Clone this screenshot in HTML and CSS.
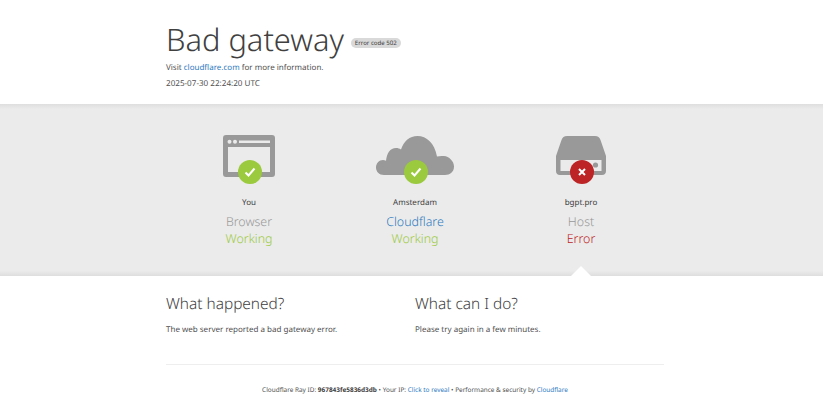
FILE: index.html
```html
<!DOCTYPE html>
<html lang="en">
<head>
<meta charset="utf-8">
<title>bgpt.pro | 502: Bad gateway</title>
<link rel="stylesheet" href="styles.css">
</head>
<body>
<header class="head">
  <div class="wrap">
    <div class="title-row">
      <h1 class="title">Bad gateway</h1>
      <span class="code">Error code 502</span>
    </div>
    <p class="visit">Visit <a href="#">cloudflare.com</a> for more information.</p>
    <p class="time">2025-07-30 22:24:20 UTC</p>
  </div>
</header>
<section class="status">
  <div class="wrap cols">
    <div class="node">
      <div class="icon">
        <svg class="glyph" width="52" height="42" viewBox="0 0 52 42"><path fill="#999" fill-rule="evenodd" d="M3 0h46a3 3 0 0 1 3 3v36a3 3 0 0 1-3 3H3a3 3 0 0 1-3-3V3a3 3 0 0 1 3-3zM5 12v25h42V12zM4.500 6.800a2 2 0 1 0 4 0 2 2 0 1 0-4 0zM10 6.800a2 2 0 1 0 4 0 2 2 0 1 0-4 0zM16 5.500v2.600h31V5.500z"/></svg>
        <span class="badge ok"><svg width="24" height="24" viewBox="0 0 24 24"><path d="M7.500 12.500l3 3 6-7" fill="none" stroke="#fff" stroke-width="2"/></svg></span>
      </div>
      <div class="place">You</div>
      <div class="kind">Browser</div>
      <div class="state good">Working</div>
    </div>
    <div class="node">
      <div class="icon">
        <svg class="glyph glyph-cloud" width="78" height="39" viewBox="0 0 78 39"><path fill="#999" d="M8 39C3 39 0 35.500 0 31.500 0 27.500 3 24 7 24c1 0 2 .2 3 .7C11 17 14 12 20 12c2 0 3.500.5 5 1.500C28 5 33.500 0 41.500 0 50.500 0 58.500 7 61 20.500c2-.5 4-.8 7-.5 5 .5 10 5 10 10.500S74 39 69 39z"/></svg>
        <span class="badge ok"><svg width="24" height="24" viewBox="0 0 24 24"><path d="M7.500 12.500l3 3 6-7" fill="none" stroke="#fff" stroke-width="2"/></svg></span>
      </div>
      <div class="place">Amsterdam</div>
      <div class="kind cf">Cloudflare</div>
      <div class="state good">Working</div>
    </div>
    <div class="node node-host">
      <div class="icon">
        <svg class="glyph" width="50" height="40" viewBox="0 0 50 40"><path fill="#999" fill-rule="evenodd" d="M11 1h28c3 0 4.500 1.500 5.500 4L50 21v15c0 2.500-1.500 4-4 4H4c-2.500 0-4-1.500-4-4V21L5.500 5C6.500 2.500 8 1 11 1zM4.500 25v11h41V25z"/><circle cx="39.500" cy="30" r="2.600" fill="#999"/></svg>
        <span class="badge bad"><svg width="24" height="24" viewBox="0 0 24 24"><path d="M9 9l6 6M15 9l-6 6" fill="none" stroke="#fff" stroke-width="2"/></svg></span>
      </div>
      <div class="place">bgpt.pro</div>
      <div class="kind">Host</div>
      <div class="state err">Error</div>
    </div>
  </div>
</section>
<section class="info">
  <div class="wrap info-cols">
    <div>
      <h2 class="sub">What happened?</h2>
      <p class="copy">The web server reported a bad gateway error.</p>
    </div>
    <div>
      <h2 class="sub">What can I do?</h2>
      <p class="copy">Please try again in a few minutes.</p>
    </div>
  </div>
</section>
<footer class="wrap foot">
  <p class="foot-line">Cloudflare Ray ID: <strong>967843fe5836d3db</strong> • Your IP: <a href="#">Click to reveal</a> • Performance &amp; security by <a href="#">Cloudflare</a></p>
</footer>
</body>
</html>
```
FILE: styles.css
```css
* { box-sizing: border-box; }
html, body { margin: 0; padding: 0; }
body {
  width: 823px;
  height: 414px;
  overflow: hidden;
  background: #fff;
  color: #505050;
  font-family: "Noto Sans", "Open Sans", sans-serif;
  text-rendering: geometricPrecision;
}
a { color: #2f7bbf; text-decoration: none; }
p { margin: 0; }
.wrap { width: 498px; margin-left: 166px; }
.head { height: 104px; padding-top: 21px; }
.title-row { display: flex; align-items: center; height: 38px; }
.title {
  margin: 0;
  font-size: 30.800px;
  font-weight: 300;
  line-height: 38px;
  color: #404040;
}
.code {
  margin-left: 7px;
  margin-top: 5px;
  padding: 0 4px;
  height: 10px;
  line-height: 10px;
  border-radius: 5px;
  background: #d9d9d9;
  font-size: 6.100px;
  color: #404040;
}
.visit { margin-top: 2px; font-size: 8px; line-height: 14px; }
.time { margin-top: 1px; font-size: 8.100px; line-height: 15px; }
.status {
  height: 172px;
  background: linear-gradient(#dedede, #ebebeb 3%, #ebebeb 97%, #dedede);
  padding-top: 31px;
}
.cols { display: grid; grid-template-columns: repeat(3, 166px); }
.node { position: relative; text-align: center; }
.icon {
  position: relative;
  height: 50px;
  display: flex;
  justify-content: center;
  align-items: flex-start;
}
.glyph-cloud { margin-top: 1px; }
.badge {
  position: absolute;
  left: 50%;
  top: 25px;
  width: 24px;
  height: 24px;
  margin-left: -11px;
  border-radius: 50%;
  display: block;
}
.badge svg { display: block; }
.ok { background: #9bca3e; }
.bad { background: #bd2426; }
.place { margin-top: 12px; font-size: 8px; line-height: 12px; color: #404040; }
.kind { margin-top: 4px; font-size: 12.400px; font-weight: 300; line-height: 17px; color: #999; }
.cf { color: #2f7bbf; }
.state { font-size: 12.400px; font-weight: 300; line-height: 17px; }
.good { color: #9bca3e; }
.err { color: #bd2426; }
.node-host::after {
  content: "";
  position: absolute;
  left: 50%;
  top: 131px;
  margin-left: -10px;
  border-left: 10px solid transparent;
  border-right: 10px solid transparent;
  border-bottom: 10px solid #fff;
}
.info { padding-top: 18px; height: 88px; }
.info-cols { display: grid; grid-template-columns: 249px 249px; }
.sub { margin: 0; font-size: 15.400px; font-weight: 300; line-height: 20px; color: #404040; }
.copy { margin-top: 10px; font-size: 8px; line-height: 12px; }
.foot { border-top: 1px solid #eee; padding-top: 20px; text-align: center; }
.foot-line { font-size: 6.450px; line-height: 10px; color: #505050; }
.foot-line strong { font-weight: 700; color: #404040; }
```
